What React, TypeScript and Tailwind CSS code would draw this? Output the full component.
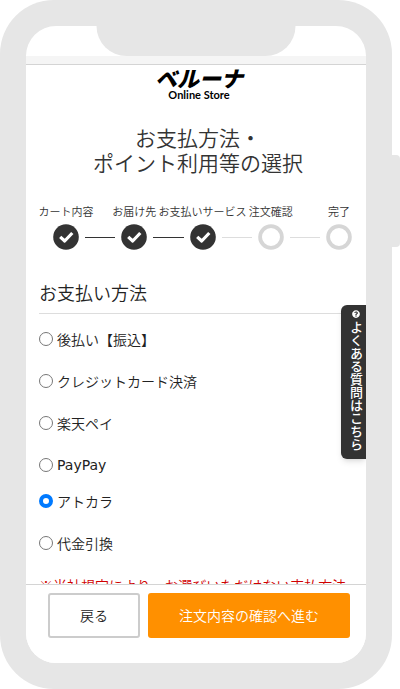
import React, { useState } from 'react';
import { FaQuestionCircle } from 'react-icons/fa';

interface Step {
    label: string;
    done: boolean;
}

const STEPS: Step[] = [
    { label: 'カート内容', done: true },
    { label: 'お届け先', done: true },
    { label: 'お支払いサービス', done: true },
    { label: '注文確認', done: false },
    { label: '完了', done: false },
];

const METHODS = ['後払い【振込】', 'クレジットカード決済', '楽天ペイ', 'PayPay', 'アトカラ', '代金引換'];

const StepMark: React.FC<{ done: boolean }> = ({ done }) => (
    <svg viewBox="0 0 26 26" className="size-[26px]" aria-hidden="true">
        {done ? (
            <>
                <circle cx="13" cy="13" r="12.8" fill="#333" />
                <path d="M7.2 12.8 L11.7 17 L19.3 9" fill="none" stroke="#fff" strokeWidth="3.2" strokeLinejoin="round" />
            </>
        ) : (
            <circle cx="13" cy="13" r="10.9" fill="#fff" stroke="#d6d6d6" strokeWidth="3.8" />
        )}
    </svg>
);

const Steps: React.FC = () => (
    <ol className="mt-7 flex">
        {STEPS.map((step, i) => (
            <li key={step.label} className="flex min-w-0 flex-1 flex-col items-center">
                <span className="flex justify-center whitespace-nowrap text-[11px] leading-4 font-[350] text-[#333]">{step.label}</span>
                <div className="mt-[5px] grid w-full grid-cols-[1fr_26px_1fr] items-center">
                    {/* each side draws half of the connector */}
                    <span className={`mr-[6px] h-px ${i === 0 ? '' : step.done ? 'bg-[#333]' : 'bg-[#ddd]'}`} />
                    <StepMark done={step.done} />
                    <span className={`ml-[6px] h-px ${i === STEPS.length - 1 ? '' : STEPS[i + 1].done ? 'bg-[#333]' : 'bg-[#ddd]'}`} />
                </div>
            </li>
        ))}
    </ol>
);

const App: React.FC = () => {
    const [method, setMethod] = useState('アトカラ');

    return (
        <div lang="ja" className="relative bg-white pr-2 font-['Noto_Sans_CJK_JP',sans-serif]">
            {/* side key of the handset */}
            <div className="absolute top-[155px] right-0 h-[92px] w-3 rounded-r-sm bg-[#e6e6e6]" />

            <div className="relative rounded-[54px] bg-[#e6e6e6] p-[26px]">
                <div className="absolute top-[26px] left-1/2 z-10 h-[30px] w-[199px] -translate-x-1/2 rounded-b-[32px] bg-[#e6e6e6]" />

                <div className="relative overflow-hidden rounded-[30px] bg-white">
                    <div className="h-[30px]" />
                    <div className="h-[9px] border-b border-[#d4d4d4] bg-[#f5f5f5]" />

                    <header className="flex flex-col items-center pl-[6px] text-black">
                        <span className="text-[22px] leading-6 font-black italic">ベルーナ</span>
                        <span className="font-['Lato',sans-serif] text-[11px] leading-3 font-bold">Online Store</span>
                    </header>

                    <main className="px-[13px]">
                        <h1 className="mt-6 pl-1 text-center text-[21px] leading-[25px] font-[350] text-[#333]">
                            お支払方法・
                            <br />
                            ポイント利用等の選択
                        </h1>

                        <div className="-mr-5 -ml-[7px]">
                            <Steps />
                        </div>

                        <fieldset className="mt-7">
                            <legend className="w-full border-b border-[#ddd] pb-[7px] text-[18px] leading-7 font-[350] text-[#222]">お支払い方法</legend>
                            <div className="mt-[15px] flex flex-col">
                                {METHODS.map(name => (
                                    <label key={name} className={`flex items-center gap-1 text-[14px] leading-5 text-[#222] ${name === 'PayPay' ? "mb-4 font-['DejaVu_Sans',sans-serif]" : 'mb-[22px] font-[350]'}`}>
                                        <input
                                            type="radio"
                                            name="method"
                                            value={name}
                                            checked={method === name}
                                            onChange={() => setMethod(name)}
                                            className="size-[14px] appearance-none rounded-full border border-[#777] bg-white checked:border-4 checked:border-[#007aff]"
                                        />
                                        {name}
                                    </label>
                                ))}
                            </div>
                        </fieldset>

                        <p className="h-[9px] overflow-hidden whitespace-nowrap text-[14px] leading-5 font-[350] text-[#d00000]">
                            ※当社規定により、お選びいただけない支払方法
                        </p>
                    </main>

                    <footer className="flex gap-2 border-t border-[#d4d4d4] bg-white px-4 pt-2 pb-[25px] pl-[22px] text-[14px] font-[350]">
                        <button type="button" className="h-[45px] w-[92px] rounded-[3px] border-2 border-[#ccc] text-[#222]">戻る</button>
                        <button type="button" className="h-[45px] flex-1 rounded-[3px] bg-[#ff9000] text-white">注文内容の確認へ進む</button>
                    </footer>

                    <a href="#faq" className="absolute top-[279px] right-0 flex w-[25px] flex-col items-center gap-[3px] rounded-l-md bg-[#333] pt-[5px] pb-2 pl-[5px] text-white shadow-md">
                        <FaQuestionCircle className="size-2" />
                        <span className="text-[13px] leading-[18px] font-medium [writing-mode:vertical-rl]">よくある質問はこちら</span>
                    </a>
                </div>
            </div>
        </div>
    );
};

export default App;
